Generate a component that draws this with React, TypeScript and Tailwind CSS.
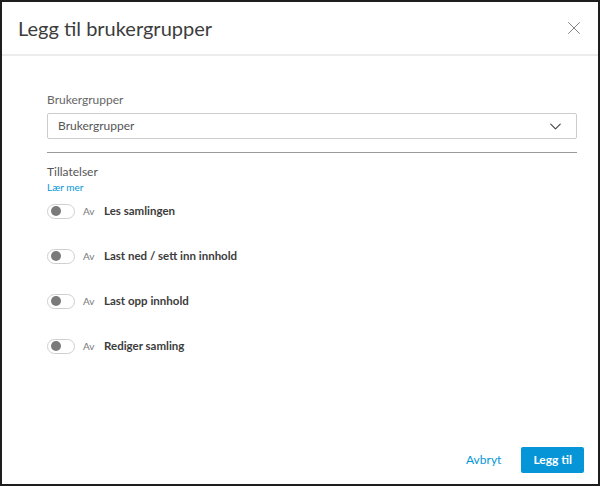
import { X, ChevronDown } from "lucide-react";

// Tillatelser som vises i dialogen
const permissions = [
  "Les samlingen",
  "Last ned / sett inn innhold",
  "Last opp innhold",
  "Rediger samling",
];

function Toggle() {
  return (
    <span className="w-[28px] h-[15px] rounded-full border border-[#cfcfcf] bg-white flex items-center pl-[3px] shrink-0">
      <span className="w-[10px] h-[10px] rounded-full bg-[#7a7a7a]" />
    </span>
  );
}

export default function App() {
  return (
    <div
      className="w-[600px] h-[486px] bg-white border-2 border-[#1e1e1e] flex flex-col text-[#3c3c3c]"
      style={{ fontFamily: 'Lato, "Noto Sans", sans-serif' }}
    >
      {/* header */}
      <div className="h-[54px] shrink-0 flex items-center justify-between pl-[16px] pr-[13px] border-b-2 border-[#ececec]">
        <h1 className="text-[20px] leading-[26px] text-[#3c3c3c]">Legg til brukergrupper</h1>
        <X className="w-[22px] h-[22px] text-[#777]" strokeWidth={1} />
      </div>

      {/* body */}
      <div className="flex-1 pl-[45px] pr-[21px] pt-[36px]">
        <label className="block text-[12px] leading-[16px] text-[#666]">Brukergrupper</label>
        <div className="mt-[5px] h-[26px] border border-[#cccccc] rounded-[2px] flex items-center justify-between pl-[10px] pr-[11px]">
          <span className="text-[12px] text-[#555]">Brukergrupper</span>
          <ChevronDown className="w-[19px] h-[19px] text-[#444]" strokeWidth={1.4} />
        </div>
        <div className="mt-[13px] h-px bg-[#9a9a9a]" />

        <div className="mt-[11px] text-[12px] leading-[16px] text-[#555]">Tillatelser</div>
        <div className="text-[10px] leading-[14px] text-[#0696d7]">Lær mer</div>

        <div className="mt-[7px] flex flex-col gap-[25px]">
          {permissions.map((p) => (
            <div key={p} className="h-[20px] flex items-center">
              <Toggle />
              <span className="ml-[8px] w-[21px] text-[10px] text-[#777]">Av</span>
              <span className="text-[11.5px] font-bold text-[#3c3c3c]">{p}</span>
            </div>
          ))}
        </div>
      </div>

      {/* footer */}
      <div className="shrink-0 flex justify-end items-center gap-[20px] pr-[14px] pb-[11px]">
        <button className="text-[12px] text-[#0696d7]">Avbryt</button>
        <button className="h-[26px] px-[12px] rounded-[2px] bg-[#0696d7] text-white text-[12px] font-bold">
          Legg til
        </button>
      </div>
    </div>
  );
}
